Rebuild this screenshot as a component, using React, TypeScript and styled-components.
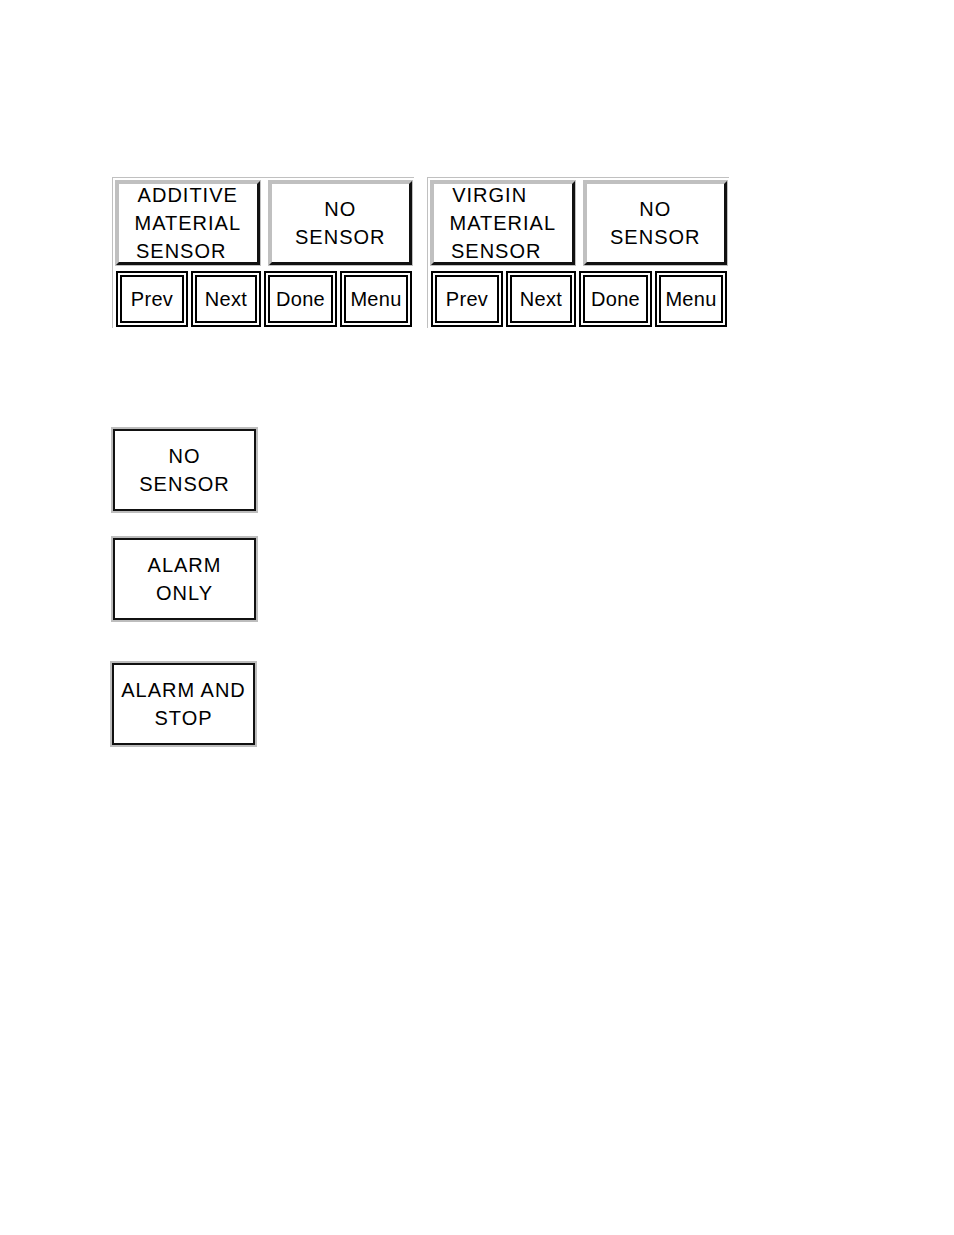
import React from "react";
import styled, { createGlobalStyle } from "styled-components";

const GlobalStyle = createGlobalStyle`
  html, body {
    margin: 0;
    padding: 0;
    background: #fff;
  }
  body {
    font-family: "Liberation Sans", Arial, sans-serif;
    color: #000;
  }
`;

const Page = styled.div`
  padding: 177px 0 0 112px;
  width: 954px;
  height: 1235px;
  box-sizing: border-box;
`;

const PanelRow = styled.div`
  display: flex;
  gap: 13px;
`;

const Panel = styled.div`
  width: 302px;
  height: 151px;
  box-sizing: border-box;
  border-top: 1px solid #c0c0c0;
  border-left: 1px solid #c0c0c0;
  padding: 3px 2px 1px 3px;
  display: flex;
  flex-direction: column;
  gap: 6px;
`;

const LabelRow = styled.div`
  display: grid;
  grid-template-columns: 1fr 1fr;
  gap: 9px;
  height: 84px;
`;

const LabelBox = styled.div`
  box-sizing: border-box;
  background: #fff;
  border: 3px solid;
  border-color: #c0c0c0 #111 #111 #c0c0c0;
  box-shadow: 0 0 0 1px #c0c0c0;
  display: flex;
  align-items: center;
  justify-content: center;
  overflow: hidden;
  font-size: 20px;
  letter-spacing: 1px;
  line-height: 28px;
  text-align: center;
  white-space: pre;
`;

const ButtonRow = styled.div`
  display: grid;
  grid-template-columns: 72px 70px 73px 72px;
  gap: 3px;
  flex: 1;
`;

const Key = styled.div`
  box-sizing: border-box;
  border: 2px solid #000;
  box-shadow: inset 0 0 0 2px #fff, inset 0 0 0 4px #000;
  background: #fff;
  display: flex;
  align-items: center;
  justify-content: center;
  font-size: 20px;
  letter-spacing: 0.3px;
`;

const OptionList = styled.div`
  display: flex;
  flex-direction: column;
  align-items: flex-start;
  margin-top: 101px;
`;

const OptionBox = styled.div<{ $gap: number; $shift?: number }>`
  box-sizing: border-box;
  width: 143px;
  height: 82px;
  margin-top: ${(p) => p.$gap}px;
  margin-left: ${(p) => p.$shift || 0}px;
  border: 2px solid #111;
  box-shadow: 0 0 0 2px #bdbdbd;
  background: #fff;
  display: flex;
  align-items: center;
  justify-content: center;
  text-align: center;
  font-size: 20px;
  letter-spacing: 1px;
  line-height: 28px;
  white-space: pre;
`;

const keys = ["Prev", "Next", "Done", "Menu"];

const SensorPanel = ({ label }: { label: string }) => (
  <Panel>
    <LabelRow>
      <LabelBox>{label}</LabelBox>
      <LabelBox>{"NO\nSENSOR"}</LabelBox>
    </LabelRow>
    <ButtonRow>
      {keys.map((k) => (
        <Key key={k}>{k}</Key>
      ))}
    </ButtonRow>
  </Panel>
);

export default function App() {
  return (
    <Page>
      <GlobalStyle />
      <PanelRow>
        <SensorPanel label={"ADDITIVE\nMATERIAL\nSENSOR  "} />
        <SensorPanel label={"VIRGIN    \nMATERIAL\nSENSOR  "} />
      </PanelRow>
      <OptionList>
        <OptionBox $gap={0} $shift={1}>{"NO\nSENSOR"}</OptionBox>
        <OptionBox $gap={27} $shift={1}>{"ALARM\nONLY"}</OptionBox>
        <OptionBox $gap={43}>{"ALARM AND\nSTOP"}</OptionBox>
      </OptionList>
    </Page>
  );
}
